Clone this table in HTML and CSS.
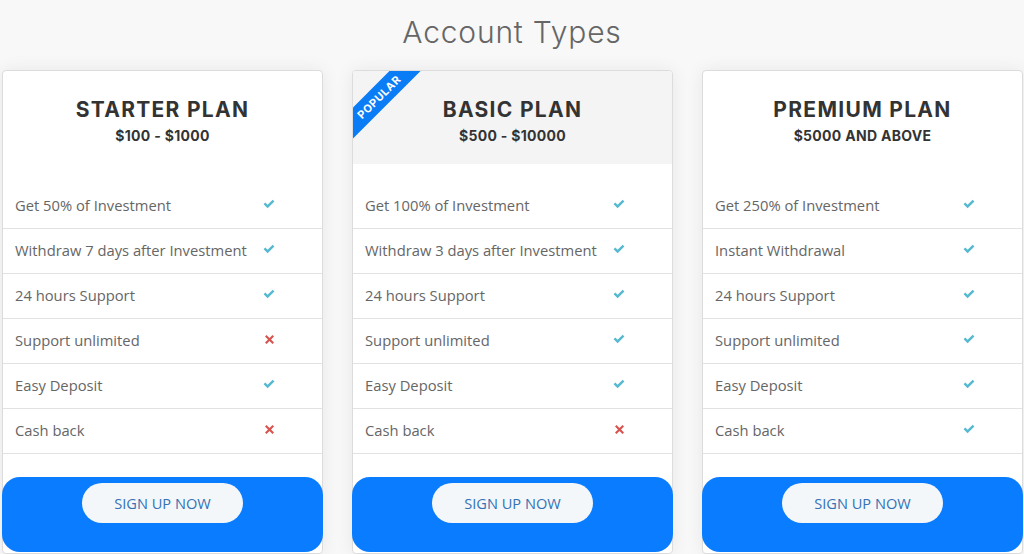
FILE: index.html
```html
<!DOCTYPE html>
<html>
<head>
<meta charset="utf-8">
<link rel="stylesheet" href="styles.css">
</head>
<body>
<h1 class="page-title">Account Types</h1>
<div class="plans">
  <div class="card">
    <div class="card-head">
      <div class="plan-name">STARTER PLAN</div>
      <div class="plan-price">$100 - $1000</div>
    </div>
    <ul class="features">
      <li><span>Get 50% of Investment</span><i class="ok"></i></li>
      <li><span>Withdraw 7 days after Investment</span><i class="ok"></i></li>
      <li><span>24 hours Support</span><i class="ok"></i></li>
      <li><span>Support unlimited</span><i class="no"></i></li>
      <li><span>Easy Deposit</span><i class="ok"></i></li>
      <li><span>Cash back</span><i class="no"></i></li>
    </ul>
    <div class="card-foot"><a class="btn">SIGN UP NOW</a></div>
  </div>
  <div class="card">
    <div class="card-head gray">
      <div class="ribbon">POPULAR</div>
      <div class="plan-name">BASIC PLAN</div>
      <div class="plan-price">$500 - $10000</div>
    </div>
    <ul class="features">
      <li><span>Get 100% of Investment</span><i class="ok"></i></li>
      <li><span>Withdraw 3 days after Investment</span><i class="ok"></i></li>
      <li><span>24 hours Support</span><i class="ok"></i></li>
      <li><span>Support unlimited</span><i class="ok"></i></li>
      <li><span>Easy Deposit</span><i class="ok"></i></li>
      <li><span>Cash back</span><i class="no"></i></li>
    </ul>
    <div class="card-foot"><a class="btn">SIGN UP NOW</a></div>
  </div>
  <div class="card">
    <div class="card-head">
      <div class="plan-name">PREMIUM PLAN</div>
      <div class="plan-price">$5000 AND ABOVE</div>
    </div>
    <ul class="features">
      <li><span>Get 250% of Investment</span><i class="ok"></i></li>
      <li><span>Instant Withdrawal</span><i class="ok"></i></li>
      <li><span>24 hours Support</span><i class="ok"></i></li>
      <li><span>Support unlimited</span><i class="ok"></i></li>
      <li><span>Easy Deposit</span><i class="ok"></i></li>
      <li><span>Cash back</span><i class="ok"></i></li>
    </ul>
    <div class="card-foot"><a class="btn">SIGN UP NOW</a></div>
  </div>
</div>
</body>
</html>
```
FILE: styles.css
```css
* { box-sizing: border-box; }
html, body { margin: 0; padding: 0; }
body {
  background: #f8f8f8;
  font-family: "Open Sans", "Liberation Sans", sans-serif;
  height: 554px;
  overflow: hidden;
}
.page-title {
  margin: 0;
  height: 70px;
  padding-top: 14px;
  text-align: center;
  font-family: "Inter", "Liberation Sans", sans-serif;
  font-weight: 300;
  font-size: 30px;
  line-height: 36px;
  letter-spacing: 0.8px;
  color: #666;
}
.plans {
  display: flex;
  gap: 29px;
  padding-left: 2px;
}
.card {
  width: 321px;
  height: 484px;
  background: #fff;
  border: 1px solid #dcdcdc;
  border-radius: 4px;
  box-shadow: 0 0 18px rgba(0,0,0,0.07);
  display: flex;
  flex-direction: column;
}
.card-head {
  position: relative;
  overflow: hidden;
  height: 93px;
  padding-top: 25px;
  text-align: center;
  color: #333;
  font-family: "Inter", "Liberation Sans", sans-serif;
  border-radius: 3px 3px 0 0;
}
.card-head.gray { background: #f4f4f4; }
.plan-name {
  font-size: 21px;
  font-weight: 700;
  line-height: 28px;
  letter-spacing: 1.3px;
}
.plan-price {
  font-size: 14px;
  font-weight: 700;
  line-height: 24px;
  letter-spacing: 0.3px;
}
.ribbon {
  position: absolute;
  left: -34px;
  top: 15px;
  width: 120px;
  height: 22px;
  line-height: 22px;
  background: #0a7cf5;
  color: #fff;
  font-size: 11px;
  font-weight: 700;
  letter-spacing: 0.5px;
  transform: rotate(-45deg);
  text-align: center;
}
.features {
  list-style: none;
  margin: 20px 0 0;
  padding: 0;
}
.features li {
  height: 45px;
  border-bottom: 1px solid #e2e2e2;
  display: flex;
  align-items: center;
  padding: 0 43px 2px 12px;
  font-size: 14.75px;
  color: #666;
}
.features li span { flex: 1; }
.features li i {
  width: 20px;
  height: 14px;
  display: block;
  background-repeat: no-repeat;
  background-position: center;
  margin-top: -2px;
}
.features li i.ok {
  background-image: url("data:image/svg+xml,%3Csvg xmlns='http://www.w3.org/2000/svg' width='12' height='10' viewBox='0 0 12 10'%3E%3Cpath d='M0.6 5.2 L2.3 3.5 L4.6 5.8 L9.7 0.7 L11.4 2.4 L4.6 9.2 Z' fill='%2356b9cf'/%3E%3C/svg%3E");
}
.features li i.no {
  background-image: url("data:image/svg+xml,%3Csvg xmlns='http://www.w3.org/2000/svg' width='9' height='9' viewBox='0 0 9 9'%3E%3Cpath d='M1.5 0 L4.5 3 L7.5 0 L9 1.5 L6 4.5 L9 7.5 L7.5 9 L4.5 6 L1.5 9 L0 7.5 L3 4.5 L0 1.5 Z' fill='%23d9534f'/%3E%3C/svg%3E");
}
.card-foot {
  margin-top: 23px;
  height: 75px;
  margin-left: -1px;
  margin-right: -1px;
  background: #0a7cff;
  border-radius: 18px;
  padding-top: 6px;
  display: flex;
  justify-content: center;
  align-items: flex-start;
}
.btn {
  display: block;
  width: 161px;
  height: 40px;
  line-height: 40px;
  border-radius: 20px;
  background: #f3f7fa;
  color: #3572b4;
  text-align: center;
  font-size: 14.6px;
  text-decoration: none;
}
```
